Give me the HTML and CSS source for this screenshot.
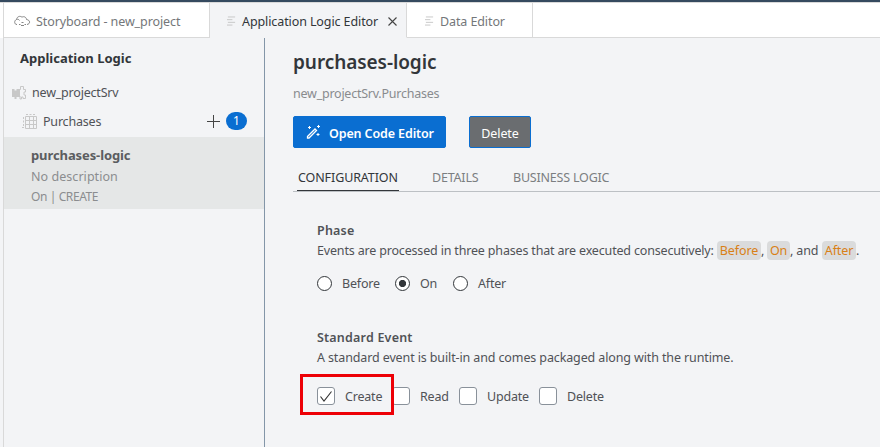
FILE: index.html
```html
<!DOCTYPE html>
<html lang="en">
<head>
<meta charset="utf-8">
<title>Application Logic Editor</title>
<link rel="stylesheet" href="styles.css">
</head>
<body>
<div class="app">
  <nav class="tabs">
    <div class="tab tab-story">
      <svg class="cloud" viewBox="0 0 16 12" fill="none" stroke="#858585"><path d="M3 9.500C0 9.500 0 5.500 2.500 4.500C3 1.500 6 .5 8 2.200C10 .8 12.500 2.500 12.500 4.500C16.500 5 16.500 9 13 9.500M2.500 4.500C4 4 5 4.500 5.500 5.500"/><path d="M5 9.500h1.500M7.500 7.500h2M10.500 9.500H12M7 10.500h3"/></svg>
      <span class="t1">Storyboard - new_project</span>
    </div>
    <div class="tab tab-logic active">
      <svg class="lines" viewBox="0 0 10 10" stroke="#c4c4c4"><path d="M1 .5h8M0 3.500h6M1 6.500h8M0 9.500h6"/></svg>
      <span class="t2">Application Logic Editor</span>
      <svg class="close" viewBox="0 0 9 9" stroke="#444" stroke-width="1.100"><path d="M.5.500l8 8M8.500.500l-8 8"/></svg>
    </div>
    <div class="tab tab-data">
      <svg class="lines" viewBox="0 0 10 10" stroke="#c4c4c4"><path d="M1 .5h8M0 3.500h6M1 6.500h8M0 9.500h6"/></svg>
      <span class="t3">Data Editor</span>
    </div>
    <div class="tab-fill"></div>
  </nav>
  <div class="workspace">
    <aside class="sidebar">
      <h2>Application Logic</h2>
      <div class="row service">
        <svg class="puzzle" viewBox="0 0 16 15"><path fill="#c8c8c8" d="M1 3h2.500v1.500h2V3H9v8H5.500v2h-2v-2H1z"/><path fill="none" stroke="#c8c8c8" d="M9 3.500h.5V.500h3v3h2V6H13v3h1.500v3.500H12V11h-1.500v2H9v-3"/></svg>
        <span class="name">new_projectSrv</span>
      </div>
      <div class="row entity">
        <svg class="table" viewBox="0 0 16 15" fill="none" stroke="#c8c8c8"><path d="M3.500 2.500h11v12h-11zM7.500 2.500v12M11.500 2.500v12M3.500 6.500h11M3.500 10.500h11"/><path d="M4 .5h2M7.500.500h2M11 .5h2M1.500 3v2M1.500 6.500v2M1.500 10v2M0 13.500h2"/></svg>
        <span class="name">Purchases</span>
        <svg class="plus" viewBox="0 0 13 13" stroke="#444"><path d="M6.500 0v13M0 6.500h13"/></svg>
        <span class="count">1</span>
      </div>
      <div class="handler">
        <strong>purchases-logic</strong>
        <p class="description">No description</p>
        <p class="small">On | CREATE</p>
      </div>
    </aside>
    <main class="content">
      <h1>purchases-logic</h1>
      <div class="path">new_projectSrv.Purchases</div>
      <div class="actions">
        <button class="primary">
          <svg class="wand" viewBox="0 0 15 15" fill="none" stroke="#fff"><path stroke-width="1.300" d="M1.500 11.500L9 4l1.500 1.500L3 13H1.500z"/><path d="M3.500 1v3M2 2.500h3M12.500 0v3M11 1.500h3M12 8v3M10.500 9.500h3"/></svg>
          <span>Open Code Editor</span>
        </button>
        <button class="secondary">Delete</button>
      </div>
      <div class="sections">
        <div class="section selected">CONFIGURATION</div>
        <div class="section">DETAILS</div>
        <div class="section">BUSINESS LOGIC</div>
      </div>
      <section class="group phase">
        <h3>Phase</h3>
        <p class="phase-text"><span class="lead">Events are processed in three phases that are executed consecutively:</span><code class="c1">Before</code><i>,</i><code class="c2">On</code><i class="and">, and</i><code class="c3">After</code><i>.</i></p>
        <div class="options">
          <label class="o1"><span class="radio"></span>Before</label>
          <label class="o2"><span class="radio on"></span>On</label>
          <label class="o3"><span class="radio"></span>After</label>
        </div>
      </section>
      <section class="group event">
        <h3>Standard Event</h3>
        <p>A standard event is built-in and comes packaged along with the runtime.</p>
        <div class="options checks">
          <label class="k1"><span class="check"><svg viewBox="0 0 12 11" fill="none" stroke="#333" stroke-width="1.100"><path d="M.5 5.500l3.500 4.500L11.500.500"/></svg></span>Create</label>
          <label class="k2"><span class="check"></span>Read</label>
          <label class="k3"><span class="check"></span>Update</label>
          <label class="k4"><span class="check"></span>Delete</label>
          <div class="highlight"></div>
        </div>
      </section>
    </main>
  </div>
</div>
</body>
</html>
```
FILE: styles.css
```css
* { box-sizing: border-box; }
body { margin: 0; background: #f3f4f6; font: 12.500px/18px "Noto Sans", "Open Sans", sans-serif; letter-spacing: -0.1px; color: #505256; }
h1, h2, h3, p { margin: 0; }
svg { display: block; flex: none; overflow: visible; }
.app { height: 447px; overflow: hidden; border-top: 2px solid #354a5f; }
.tabs { display: flex; height: 36px; padding-left: 3px; border-top: 1px solid #d9d9d9; background: #fff; }
.tab { display: flex; align-items: center; height: 35px; padding-top: 3px; border-right: 1px solid #d9d9d9; border-bottom: 1px solid #d9d9d9; color: #74777a; white-space: nowrap; }
.tab-story { width: 207px; padding-left: 10px; border-left: 1px solid #d9d9d9; }
.tab-logic { width: 197px; padding-left: 17px; }
.tab-data { width: 126px; padding-left: 18px; }
.tab.active { background: #f3f4f6; border-bottom-color: #f3f4f6; color: #32363a; }
.tab-fill { flex: 1; height: 35px; border-bottom: 1px solid #d9d9d9; }
.t1 { letter-spacing: -0.1px; }
.cloud { width: 16px; height: 12px; margin: -2px 6px 0 0; }
.lines { width: 9px; height: 10px; margin: -2px 6px 0 0; }
.close { width: 9px; height: 9px; margin: 0 0 0 10px; }
.workspace { display: flex; height: 409px; margin-left: 3px; border-left: 1px solid #d9d9d9; }
.sidebar { width: 261px; border-right: 1px solid #8396a8; white-space: nowrap; }
.sidebar h2 { padding: 11px 0 0 16px; font-size: 13px; line-height: 18px; letter-spacing: 0; color: #32363a; }
.row { display: flex; align-items: center; }
.name { letter-spacing: -0.2px; }
.service { height: 20px; margin-top: 16px; padding-left: 7px; }
.puzzle { width: 16px; height: 15px; margin-right: 5px; }
.entity { height: 20px; margin-top: 8px; padding-left: 18px; }
.table { width: 16px; height: 15px; margin-right: 5px; }
.entity .name { width: 160px; padding-top: 2px; }
.plus { width: 13px; height: 13px; margin-left: 4px; }
.count { width: 21px; height: 18px; margin-left: 6px; border-radius: 9px; background: #0a6ed1; color: #fff; text-align: center; font-size: 12px; }
.handler { height: 72px; margin-top: 6px; padding: 9px 27px; background: #e5e7e7; color: #8b8d8f; }
.handler strong { display: block; line-height: 18px; font-size: 13px; color: #5b5d60; }
.handler p { margin-top: 4px; }
.handler .description { letter-spacing: 0.05px; }
.handler p.small { margin-top: 2px; font-size: 12px; letter-spacing: -0.4px; }
.content { flex: 1; padding-left: 28px; white-space: nowrap; }
h1 { margin-top: 10px; font-size: 19px; line-height: 28px; letter-spacing: -0.07px; color: #32363a; font-weight: 600; }
.path { margin-top: 9px; letter-spacing: -0.24px; color: #898b8e; }
.actions { display: flex; gap: 23px; margin-top: 13px; }
button { display: flex; align-items: center; height: 32px; padding: 3px 0 0; border: 1px solid #0a6ed1; border-radius: 2px; color: #fff; font: 600 12.500px/18px "Noto Sans", sans-serif; letter-spacing: -0.12px; }
.primary { width: 153px; padding-left: 12px; background: #0a6ed1; }
.wand { width: 15px; height: 15px; margin: -3px 8px 0 0; }
.secondary { width: 62px; justify-content: center; background: #6a6d70; font-weight: 400; }
.sections { display: flex; height: 44px; border-bottom: 1px solid #bcc0c4; color: #7b7e81; }
.section { padding-top: 21px; margin-right: 34px; }
.section.selected { width: 102px; height: 43px; margin: 0 33px 0 4px; padding-left: 1px; border-bottom: 1px solid #32363a; color: #32363a; }
.section:nth-child(2) { width: 47px; letter-spacing: -0.2px; }
.section:last-child { letter-spacing: -0.2px; }
.group { padding-left: 24px; }
.phase { margin-top: 30px; }
.event { margin-top: 37px; }
h3 { font-size: 12.500px; line-height: 18px; letter-spacing: 0.2px; font-weight: 600; }
.group p { margin-top: 2px; letter-spacing: -0.12px; }
.group .phase-text { display: flex; align-items: center; height: 19px; margin-top: 1px; }
.group .lead { width: 400px; letter-spacing: -0.17px; }
.phase-text i { width: 6px; font-style: normal; }
.phase-text i.and { width: 32px; }
code { height: 19px; padding-top: 1px; border-radius: 4px; background: #dadbdc; color: #d98016; font: inherit; text-align: center; }
.c1 { width: 44px; }
.c2 { width: 23px; }
.c3 { width: 34px; }
.options { position: relative; display: flex; margin-top: 15px; }
label { display: flex; align-items: center; height: 17px; padding-top: 1px; letter-spacing: -0.2px; }
.radio { width: 15px; height: 15px; margin: -2px 10px 0 0; border: 1px solid #32363a; border-radius: 50%; background: #fff; }
.radio.on { background: radial-gradient(circle, #32363a 3.200px, #fff 4px); }
.o1 { width: 78px; }
.o2 { width: 58px; }
.checks { margin-top: 19px; }
.checks label { height: 19px; padding-top: 2px; }
.check { width: 18px; height: 18px; margin: -2px 10px 0 0; padding: 3px 2px; border: 1px solid #89919a; border-radius: 3px; background: #fff; }
.check svg { width: 12px; height: 11px; }
.k1 { width: 75px; }
.k2 { width: 67px; }
.k3 { width: 80px; }
.highlight { position: absolute; left: -17px; top: -12px; width: 94px; height: 41px; border: 3px solid #ed0006; }
```
